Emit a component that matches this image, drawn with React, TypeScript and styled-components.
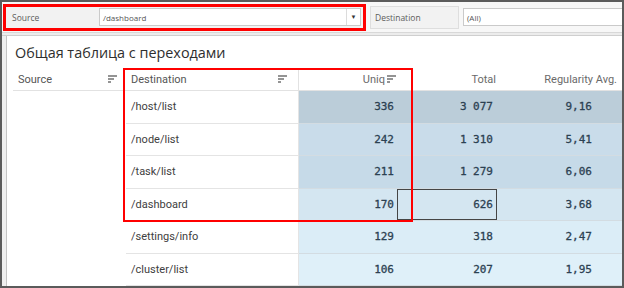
import React from 'react';
import styled, { createGlobalStyle } from 'styled-components';

const GlobalStyle = createGlobalStyle`
  body {
    margin: 0;
    background: #ffffff;
  }
`;

const Frame = styled.div`
  width: 624px;
  height: 288px;
  box-sizing: border-box;
  border: 2px solid #5b5b5b;
  display: flex;
  flex-direction: column;
  overflow: hidden;
  background: #ffffff;
`;

/* top filter strip */
const FilterBar = styled.div`
  height: 30px;
  flex: none;
  display: flex;
  align-items: center;
  gap: 4px;
  padding-left: 1px;
  background: #f7f7f7;
  font-family: "Open Sans", sans-serif;
  font-size: 8.5px;
  color: #5c5c5c;
`;

const Marked = styled.div`
  width: 363px;
  height: 27px;
  box-sizing: border-box;
  border: 3px solid #ff0000;
  display: flex;
  align-items: center;
  background: #f2f2f2;
`;

const FilterLabel = styled.div<{ $boxed?: boolean }>`
  width: ${(p) => (p.$boxed ? '89px' : '93px')};
  height: ${(p) => (p.$boxed ? '23px' : 'auto')};
  box-sizing: border-box;
  padding-left: ${(p) => (p.$boxed ? '4px' : '6px')};
  display: flex;
  align-items: center;
  flex: none;
  background: #f2f2f2;
  border: ${(p) => (p.$boxed ? '1px solid #dedede' : 'none')};
`;

const SelectBox = styled.div<{ $wide?: boolean }>`
  height: 18px;
  box-sizing: border-box;
  display: flex;
  align-items: center;
  flex: 1;
  background: #ffffff;
  border: 1px solid #cacaca;
  margin-right: ${(p) => (p.$wide ? '-6px' : '2px')};
  color: #555555;
  font-size: 8px;
`;

const SelectValue = styled.span`
  flex: 1;
  padding-left: 3px;
`;

const SelectArrow = styled.span`
  width: 13px;
  height: 100%;
  border-left: 1px solid #dcdcdc;
  display: flex;
  align-items: center;
  justify-content: center;
  font-size: 6px;
  color: #333333;
`;

const BarRule = styled.div`
  height: 2px;
  flex: none;
  background: #ececec;
  border-top: 1px solid #d8d8d8;
  border-bottom: 1px solid #cfcfcf;
`;

const Body = styled.div`
  flex: 1;
  display: flex;
  min-height: 0;
`;

const Gutter = styled.div`
  width: 4px;
  flex: none;
  background: #efefef;
  border-right: 1px solid #c4c4c4;
`;

const Panel = styled.div`
  flex: 1;
  padding-left: 6px;
  display: flex;
  flex-direction: column;
  min-width: 0;
`;

const Title = styled.div`
  height: 32px;
  flex: none;
  line-height: 33px;
  padding-left: 2px;
  font-family: "Open Sans", sans-serif;
  font-size: 14.4px;
  color: #2e2e2e;
`;

const Table = styled.div`
  position: relative;
  display: grid;
  grid-template-columns: 113px 173px 98px 100px 1fr;
  grid-template-rows: 23px repeat(6, 32.5px);
  font-family: Roboto, sans-serif;
  font-size: 11px;
`;

const HeadCell = styled.div<{ $right?: boolean; $pr?: number; $divider?: boolean }>`
  display: flex;
  align-items: center;
  justify-content: ${(p) => (p.$right ? 'flex-end' : 'space-between')};
  gap: 2px;
  box-sizing: border-box;
  padding-left: 5px;
  padding-right: ${(p) => p.$pr ?? 0}px;
  border-bottom: 1px solid #e2e2e2;
  border-right: ${(p) => (p.$divider ? '1px solid #e2e2e2' : 'none')};
  color: ${(p) => (p.$right ? '#6a6a6a' : '#555555')};
  white-space: nowrap;
`;

const EmptyCell = styled.div``;

const PathCell = styled.div`
  display: flex;
  align-items: center;
  box-sizing: border-box;
  padding-left: 5px;
  border-bottom: 1px solid #e4e4e4;
  border-right: 1px solid #e4e4e4;
  color: #404040;
`;

const NumCell = styled.div<{ $bg: string; $pr: number; $selected?: boolean }>`
  display: flex;
  align-items: center;
  justify-content: flex-end;
  box-sizing: border-box;
  padding-right: ${(p) => p.$pr}px;
  background: ${(p) => p.$bg};
  border-bottom: 1px solid #d3dce2;
  box-shadow: ${(p) => (p.$selected ? 'inset 0 0 0 1px #454545' : 'none')};
  font-family: "DejaVu Sans Mono", monospace;
  font-size: 11px;
  color: #2c4152;
  -webkit-text-stroke: 0.3px #2c4152;
  white-space: pre;
`;

const Highlight = styled.div`
  position: absolute;
  left: 110px;
  top: 0;
  width: 290px;
  height: 154px;
  box-sizing: border-box;
  border: 2px solid #ff0000;
  pointer-events: none;
`;

const SortIcon = () => (
  <svg width="9" height="8" viewBox="0 0 9 8">
    <g stroke="#666666" strokeWidth="1.4">
      <line x1="0" y1="1" x2="9" y2="1" />
      <line x1="0" y1="4" x2="6" y2="4" />
      <line x1="0" y1="7" x2="3" y2="7" />
    </g>
  </svg>
);

const rows = [
  { path: '/host/list', uniq: '336', total: '3 077', avg: '9,16', bg: '#bbcdd9' },
  { path: '/node/list', uniq: '242', total: '1 310', avg: '5,41', bg: '#c9dcea' },
  { path: '/task/list', uniq: '211', total: '1 279', avg: '6,06', bg: '#c6dae8' },
  { path: '/dashboard', uniq: '170', total: '626', avg: '3,68', bg: '#d4e6f1', selected: true },
  { path: '/settings/info', uniq: '129', total: '318', avg: '2,47', bg: '#dbedf7' },
  { path: '/cluster/list', uniq: '106', total: '207', avg: '1,95', bg: '#dff0f9' },
];

export default function App() {
  return (
    <>
      <GlobalStyle />
      <Frame>
        <FilterBar>
          <Marked>
            <FilterLabel>Source</FilterLabel>
            <SelectBox>
              <SelectValue>/dashboard</SelectValue>
              <SelectArrow>▼</SelectArrow>
            </SelectBox>
          </Marked>
          <FilterLabel $boxed>Destination</FilterLabel>
          <SelectBox $wide>
            <SelectValue>(All)</SelectValue>
          </SelectBox>
        </FilterBar>
        <BarRule />
        <Body>
          <Gutter />
          <Panel>
            <Title>Общая таблица с переходами</Title>
            <Table>
              <HeadCell $pr={9}>
                Source <SortIcon />
              </HeadCell>
              <HeadCell $pr={11} $divider>
                Destination <SortIcon />
              </HeadCell>
              <HeadCell $right $pr={1}>
                Uniq <SortIcon />
              </HeadCell>
              <HeadCell $right $pr={1}>Total</HeadCell>
              <HeadCell $right $pr={5}>Regularity Avg.</HeadCell>

              {rows.map((r) => (
                <React.Fragment key={r.path}>
                  <EmptyCell />
                  <PathCell>{r.path}</PathCell>
                  <NumCell $bg={r.bg} $pr={3}>{r.uniq}</NumCell>
                  <NumCell $bg={r.bg} $pr={4} $selected={r.selected}>{r.total}</NumCell>
                  <NumCell $bg={r.bg} $pr={30}>{r.avg}</NumCell>
                </React.Fragment>
              ))}
              <Highlight />
            </Table>
          </Panel>
        </Body>
      </Frame>
    </>
  );
}
